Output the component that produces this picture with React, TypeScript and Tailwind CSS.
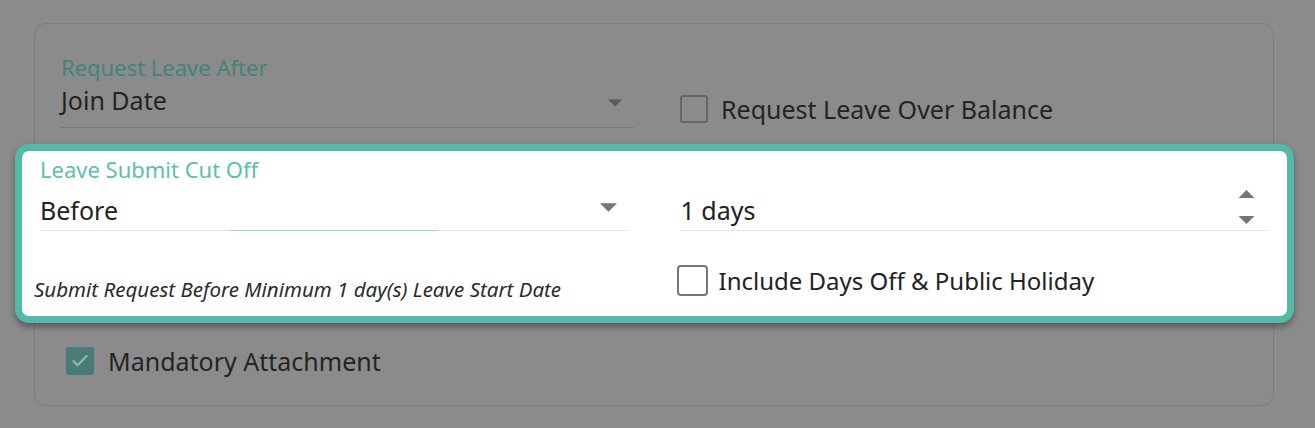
import { Check } from "lucide-react";

// ─── Small drawings ───────────────────────────────────────────────────────────

function Caret({ up = false, className }: { up?: boolean; className: string }) {
  return (
    <svg viewBox="0 0 16 8" className={className} fill="currentColor">
      {up ? <polygon points="0,8 16,8 8,0" /> : <polygon points="0,0 16,0 8,8" />}
    </svg>
  );
}

// ─── Dimmed card rows ─────────────────────────────────────────────────────────

function DimSelect() {
  return (
    <div className="w-[573px]">
      <div className="text-[22px] leading-[30px] text-[#428479]">Request Leave After</div>
      <div className="mt-px flex h-[45px] items-start justify-between border-b border-[#7b7b7b] pr-[12px]">
        <span className="text-[25px] leading-[34px] text-[#242424]">Join Date</span>
        <Caret className="mt-[16px] h-[8px] w-[14px] text-[#5a5a5a]" />
      </div>
    </div>
  );
}

// ─── Highlighted section ──────────────────────────────────────────────────────

function CutOffPanel() {
  return (
    <div className="-ml-[20px] -mr-[21px] mt-[16px] h-[179px] rounded-[14px] border-[7px] border-[#53b9a8] bg-white pl-[18px] pr-[19px] pt-[3px] shadow-[0_4px_6px_rgba(0,0,0,0.35)]">
      <div className="text-[22px] leading-[30px] text-[#5cbfab]">Leave Submit Cut Off</div>
      <div className="grid grid-cols-2 gap-x-[53px]">
        <div className="relative flex h-[47px] items-start justify-between border-b border-[#e4e8ea] pt-[9px] pr-[11px]">
          <span className="text-[25px] leading-[34px] text-[#222]">Before</span>
          <Caret className="mt-[10px] h-[9px] w-[17px] text-[#757575]" />
          <span className="absolute -bottom-px left-[190px] h-px w-[208px] bg-[#9dd7cc]" />
        </div>
        <div className="flex h-[47px] items-start justify-between border-b border-[#e4e8ea] pt-[9px] pr-[13px]">
          <span className="text-[25px] leading-[34px] text-[#222]">1 days</span>
          <div className="-mt-[3px] flex flex-col gap-[18px] text-[#757575]">
            <Caret up className="h-[8px] w-[17px]" />
            <Caret className="h-[8px] w-[17px]" />
          </div>
        </div>
        <div className="-ml-[6px] mt-[44px] whitespace-nowrap text-[20.5px] italic leading-[28px] text-[#2b2b2b]">
          Submit Request Before Minimum 1 day(s) Leave Start Date
        </div>
        <div className="-ml-[4px] mt-[33px] flex h-[33px] items-center gap-[11px]">
          <span className="h-[31px] w-[31px] rounded-[4px] border-2 border-[#757575] bg-white" />
          <span className="text-[24px] leading-[33px] text-[#222]">Include Days Off &amp; Public Holiday</span>
        </div>
      </div>
    </div>
  );
}

// ─── Page ─────────────────────────────────────────────────────────────────────

export default function App() {
  return (
    <div
      className="h-[428px] w-[1315px] overflow-hidden bg-[#8b8b8b] pl-[34px] pt-[23px]"
      style={{ fontFamily: '"Noto Sans", "Open Sans", sans-serif' }}
    >
      <div className="h-[383px] w-[1240px] rounded-[12px] border border-[#7d7d7d]">
        <div className="flex items-start pl-[26px] pt-[28px]">
          <DimSelect />
          <div className="ml-[46px] mt-[40px] flex h-[34px] items-center gap-[13px]">
            <span className="h-[28px] w-[28px] rounded-[3px] border-2 border-[#666]" />
            <span className="text-[25px] leading-[34px] text-[#242424]">Request Leave Over Balance</span>
          </div>
        </div>
        <CutOffPanel />
        <div className="ml-[31px] mt-[21px] flex h-[34px] items-center gap-[14px]">
          <span className="flex h-[28px] w-[28px] items-center justify-center rounded-[3px] bg-[#477d74]">
            <Check size={20} strokeWidth={2.5} className="text-[#93b8b1]" />
          </span>
          <span className="text-[25px] leading-[34px] text-[#242424]">Mandatory Attachment</span>
        </div>
      </div>
    </div>
  );
}
